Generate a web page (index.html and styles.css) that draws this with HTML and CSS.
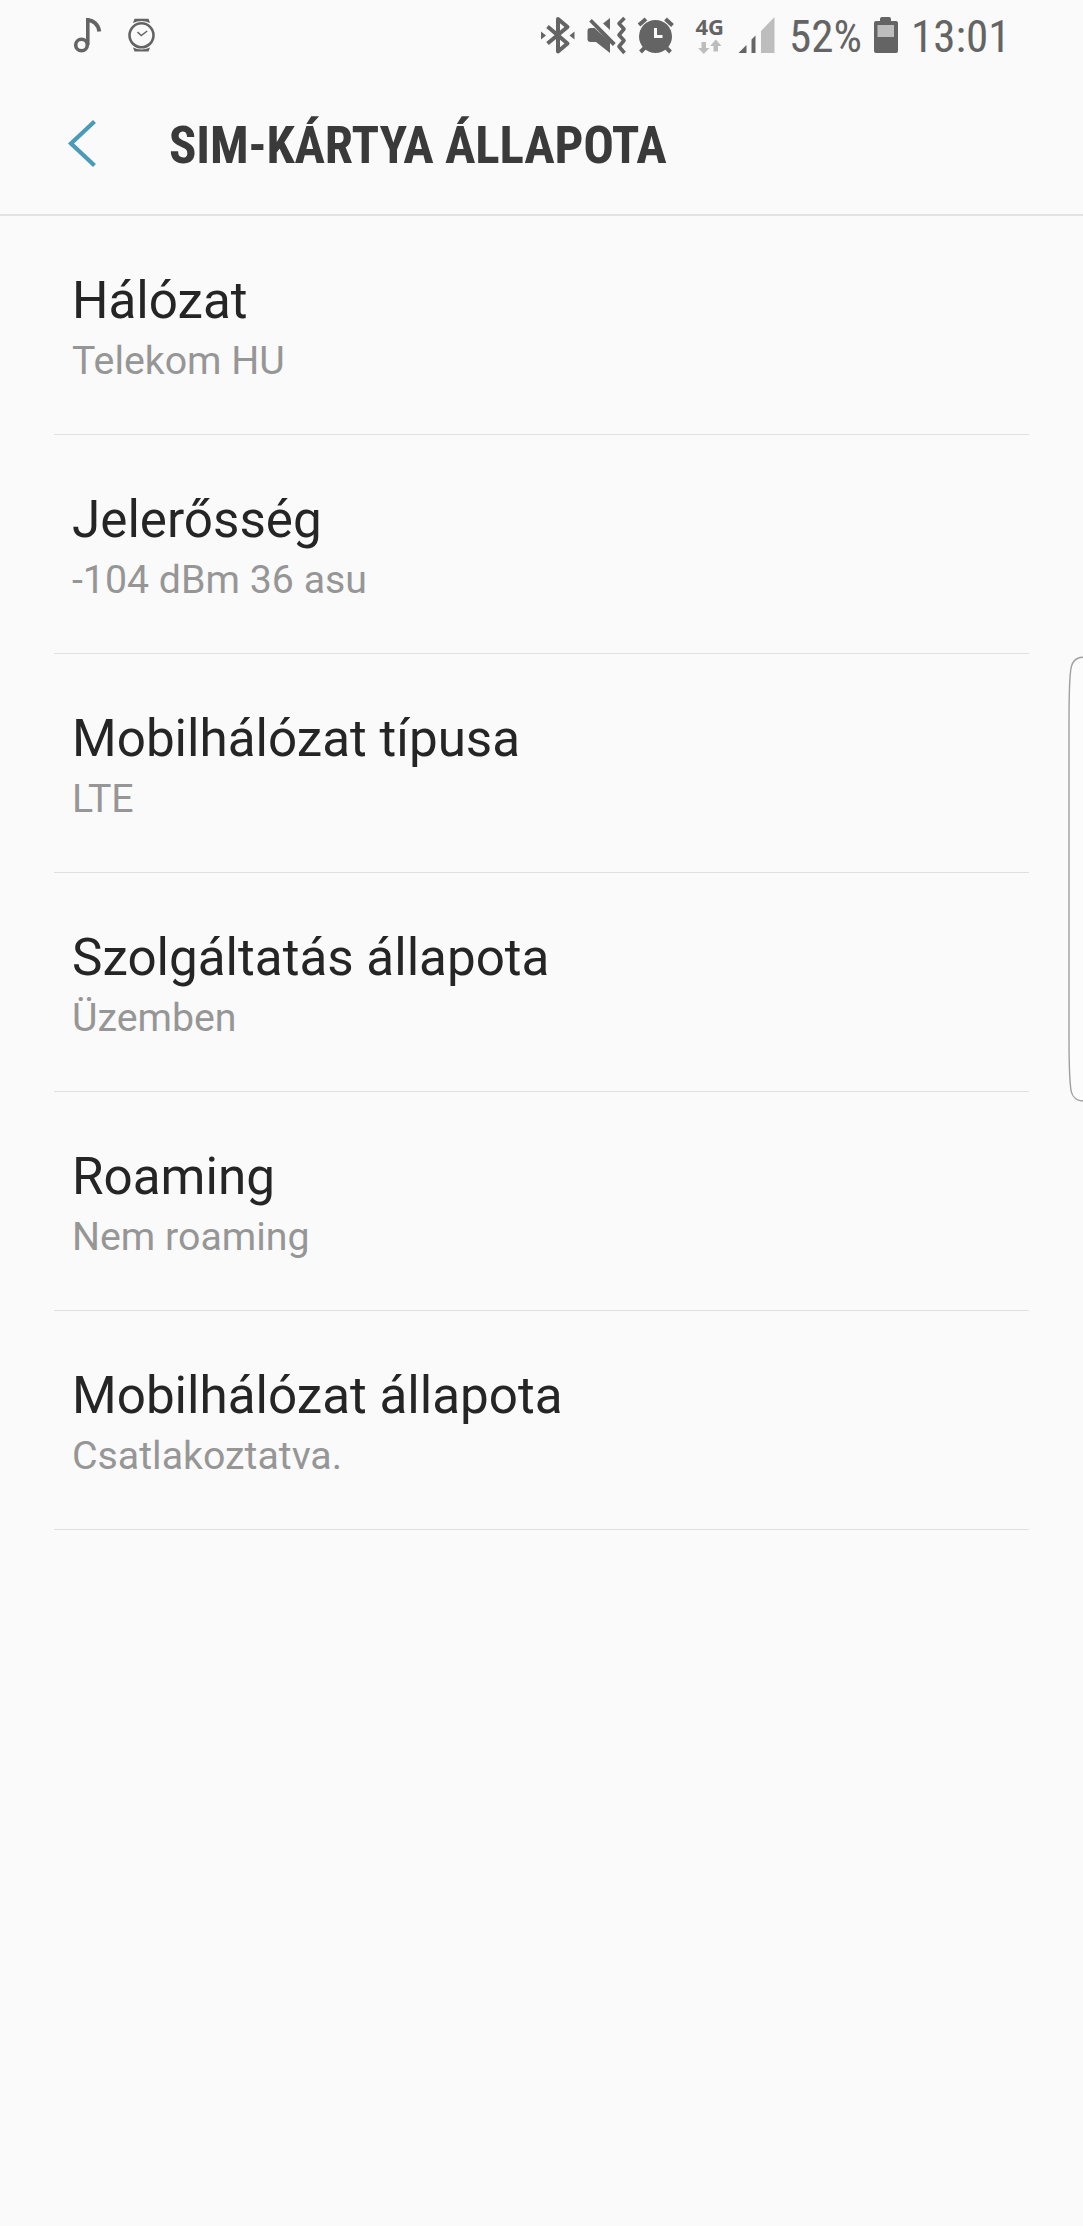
FILE: index.html
```html
<!DOCTYPE html>
<html lang="hu">
<head>
    <meta charset="UTF-8">
    <meta name="viewport" content="width=device-width, initial-scale=1.0">
    <title>SIM-kártya állapota</title>
    <link rel="stylesheet" href="styles.css">
</head>
<body>
    <div class="status-bar">
        <svg class="notifications" width="90" height="72" viewBox="0 0 90 72">
            <g fill="none" stroke="#646464">
                <circle cx="11.5" cy="45" r="5.8" stroke-width="3.6"/>
                <path d="M17.8 45V18" stroke-width="3.6"/>
                <path d="M17 20.2c6.500 0 11.200 4 12.300 11.300" stroke-width="4"/>
                <circle cx="71.500" cy="35.300" r="12" stroke-width="2.6"/>
                <path d="M67.500 32l3.700 3.500 6-4.500" stroke-width="1.500"/>
            </g>
            <path d="M64.500 18.800h14l1.500 4.200q-8.500-4-17 0zM64.500 51.600h14l1.500-4q-8.500 4-17 0z" fill="#646464"/>
        </svg>
        <svg class="indicators" width="240" height="72" viewBox="540 0 240 72">
            <g fill="none" stroke="#646464" stroke-width="4">
                <!-- bluetooth -->
                <path d="M547.500 26.500L567.500 43.500L558 51.500V19L567.500 27L547.500 43.500" stroke-linejoin="round"/>
                <!-- vibrate -->
                <path d="M624.500 18l-5.500 5.500 5 5.500-5 6 5 5.500-5 6 5.500 6.500" stroke-width="3.600" stroke-linejoin="round"/>
                <!-- alarm -->
                <path d="M639 25l7-6M665.500 19l7 6.500M644.500 48l-4 4M666.500 48l4 4"/>
            </g>
            <g fill="#646464">
                <path d="M541 31.500v8l5-4zM574.500 31.500v8l-5-4z"/>
                <path d="M603 23.500l7-5.500v12zM587.500 31q0-3 3-3h4l15.500 14v11l-14-11h-5.500q-3 0-3-3z"/>
                <path d="M589.200 21.500l2.600-2.500 24 24-3 3z"/>
                <circle cx="655.500" cy="36.500" r="16.500"/>
                <path d="M738.500 53l8-8v8zM751.500 53V39.500l4-4V53z"/>
            </g>
            <path d="M589 18.500l26 27" stroke="#fafafa" stroke-width="1.400" transform="translate(2.500,-2)"/>
            <path d="M655.500 28v8.500h7" fill="none" stroke="#fafafa" stroke-width="3"/>
            <g fill="#bdbdbd">
                <path d="M761 53V31l13.500-14V53z"/>
                <path d="M701.500 42h4.500v6h3.500l-5.700 6-5.700-6h3.400zM713.500 51.500h4.500V46h3.500l-5.700-6.500-5.700 6.500h3.400z"/>
            </g>
            <text class="network" x="695.500" y="34.500" textLength="28.500">4G</text>
        </svg>
        <span class="status-text percent">52%</span>
        <svg class="battery" width="26" height="72" viewBox="0 0 26 72">
            <path d="M7 21v-2q0-2 2-2h7q2 0 2 2v2h5q2 0 2 2v28q0 2-2 2H3q-2 0-2-2V23q0-2 2-2z" fill="#646464"/>
            <path d="M4.500 25h16.500v12H4.500z" fill="#bdbdbd"/>
        </svg>
        <span class="status-text clock">13:01</span>
    </div>

    <header class="header">
        <svg class="back" width="30" height="50" viewBox="0 0 30 50">
            <path d="M27.500 3.500L4 25.500L27.500 47.500" fill="none" stroke="#4b9ab8" stroke-width="4.200"/>
        </svg>
        <h1>SIM-KÁRTYA ÁLLAPOTA</h1>
    </header>

    <main class="list">
        <div class="item">
            <div class="title">Hálózat</div>
            <div class="summary">Telekom HU</div>
        </div>
        <div class="item">
            <div class="title">Jelerősség</div>
            <div class="summary">-104 dBm 36 asu</div>
        </div>
        <div class="item">
            <div class="title">Mobilhálózat típusa</div>
            <div class="summary">LTE</div>
        </div>
        <div class="item">
            <div class="title">Szolgáltatás állapota</div>
            <div class="summary">Üzemben</div>
        </div>
        <div class="item">
            <div class="title">Roaming</div>
            <div class="summary">Nem roaming</div>
        </div>
        <div class="item">
            <div class="title">Mobilhálózat állapota</div>
            <div class="summary">Csatlakoztatva.</div>
        </div>
    </main>

    <!-- edge panel handle -->
    <svg class="edge-handle" width="15" height="448" viewBox="0 0 15 448">
        <path d="M16 2.200C6 2 3 9 2.500 17Q1 30 1 70V378Q1 418 2.500 431C3 440 6 446 16 446" fill="#fcfcfc" stroke="#a0a0a0" stroke-width="1.400"/>
    </svg>
</body>
</html>
```
FILE: styles.css
```css
* {
    box-sizing: border-box;
}
body {
    margin: 0;
    min-height: 100vh;
    background-color: #fafafa;
    font-family: Roboto, sans-serif;
    position: relative;
    overflow: hidden;
}
.status-bar {
    display: flex;
    height: 72px;
    padding-left: 70px;
    color: #646464;
}
.status-bar svg {
    flex: none;
}
.indicators {
    margin-left: 380px;
}
.network {
    font-family: "Open Sans", sans-serif;
    font-size: 22px;
    font-weight: bold;
    fill: #646464;
}
.status-text {
    font-family: "Roboto Condensed", Roboto, sans-serif;
    font-stretch: 75%;
    font-size: 45px;
    line-height: 74px;
    white-space: nowrap;
}
.percent {
    width: 84px;
    padding-left: 9px;
}
.battery {
    margin-left: 9px;
}
.clock {
    margin-left: 12px;
}
.header {
    display: flex;
    align-items: center;
    height: 144px;
    padding-left: 67px;
    border-bottom: 2px solid #e3e3e3;
}
h1 {
    margin: 6px 0 0 72px;
    color: #3a3a3a;
    font-family: "Roboto Condensed", Roboto, sans-serif;
    font-stretch: 75%;
    font-size: 51px;
    font-weight: bold;
    letter-spacing: -0.2px;
    line-height: 60px;
    white-space: nowrap;
}
.list {
    margin: 0 54px;
}
.item {
    height: 219px;
    padding: 55px 18px 0;
    border-bottom: 1px solid #e0e0e0;
}
.title {
    color: #252525;
    font-size: 51.2px;
    line-height: 60px;
}
.summary {
    margin-top: 7px;
    color: #969696;
    font-size: 39.3px;
    line-height: 46px;
}
.edge-handle {
    position: absolute;
    top: 655px;
    right: 0;
}
```
